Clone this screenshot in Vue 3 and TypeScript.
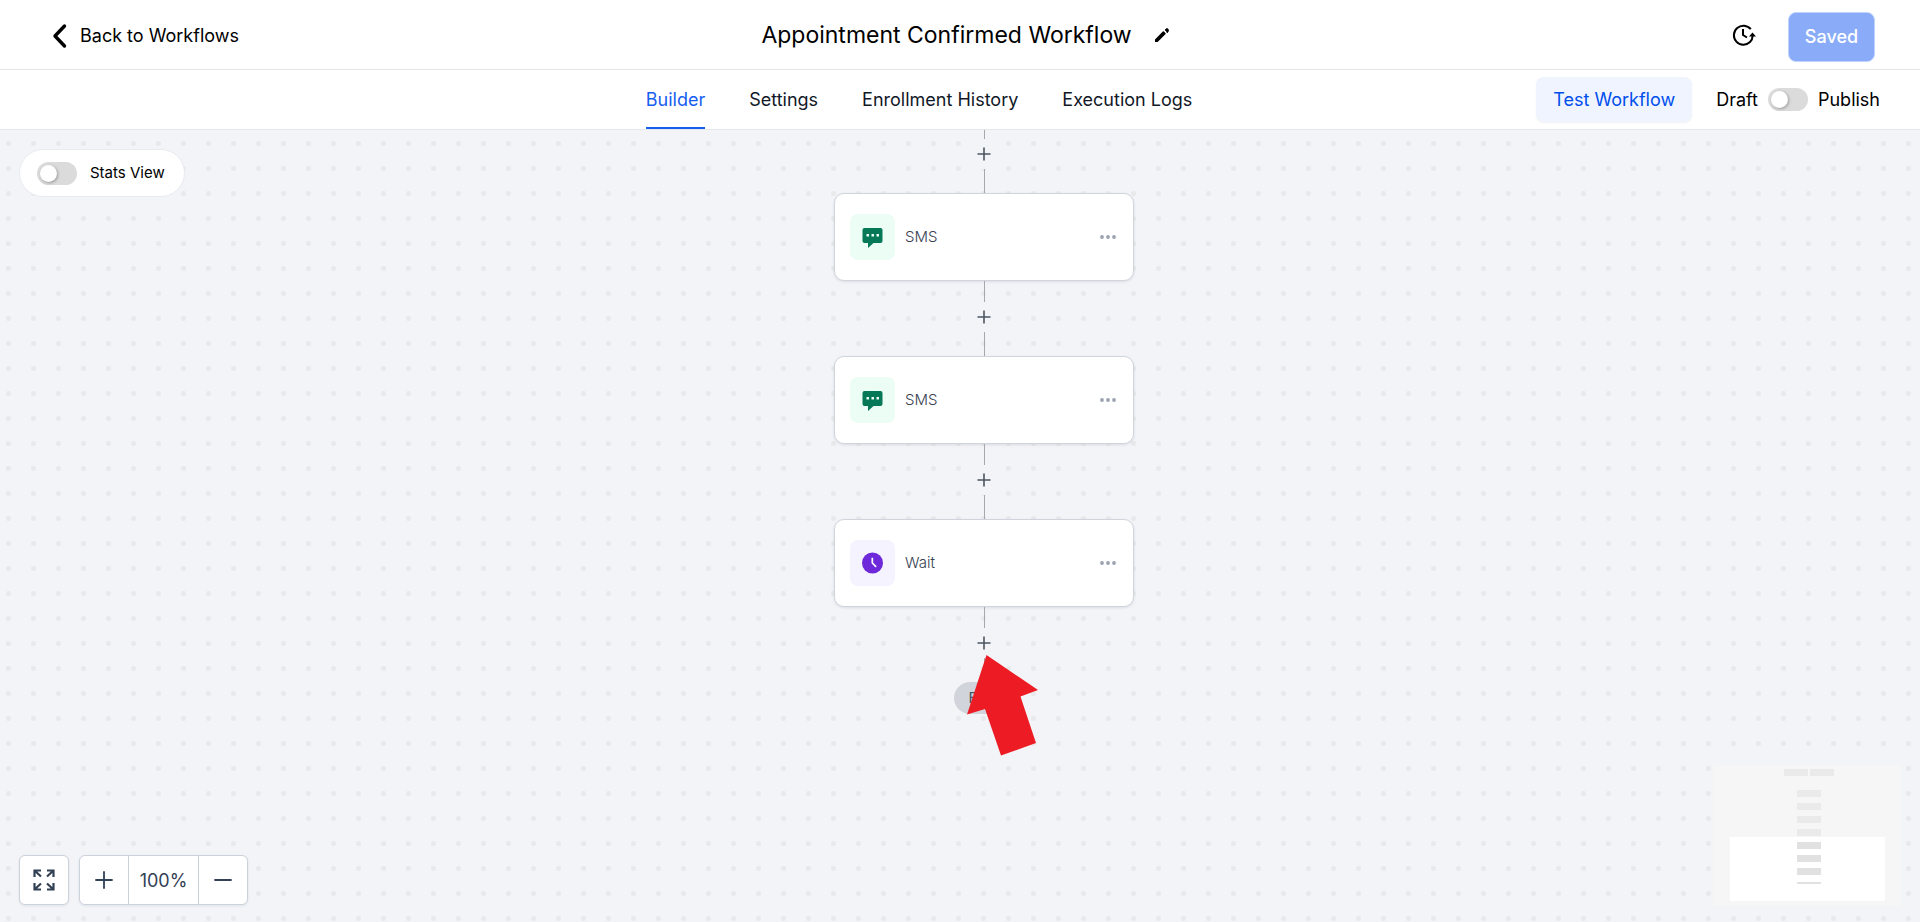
<script setup lang="ts">
import { ref } from 'vue'

interface WorkflowStep {
  id: number
  kind: 'sms' | 'wait'
  label: string
}

const tabs: string[] = ['Builder', 'Settings', 'Enrollment History', 'Execution Logs']
const activeTab = ref('Builder')
const published = ref(false)
const statsView = ref(false)
const zoomLevel = ref(100)

const steps: WorkflowStep[] = [
  { id: 1, kind: 'sms', label: 'SMS' },
  { id: 2, kind: 'sms', label: 'SMS' },
  { id: 3, kind: 'wait', label: 'Wait' },
]

const outsideNodes: number[] = [25, 38, 51, 64]
const insideNodes: number[] = [77, 90, 103]
</script>

<template>
  <div class="page">
    <header class="topbar">
      <a class="back" href="#">
        <svg width="15" height="26" viewBox="0 0 15 26" aria-hidden="true">
          <path d="M12.500 3 3 13l9.500 10" fill="none" stroke="#000" stroke-width="3.400" stroke-linecap="round" stroke-linejoin="round" />
        </svg>
        Back to Workflows
      </a>
      <div class="title-group">
        <h1>Appointment Confirmed Workflow</h1>
        <button class="icon-button" type="button" aria-label="Rename workflow">
          <svg width="16" height="16" viewBox="0 0 16 16" aria-hidden="true">
            <path d="M1 12.400 8.800 4.600q.6-.6 1.200 0l1.400 1.400q.6.600 0 1.200L3.600 15H1z" />
            <path d="M11 3l1-1q1-.9 2 0t0 3l-.8.800q-.4-1.800-2.200-2.800z" stroke="#000" stroke-width=".8" />
          </svg>
        </button>
      </div>
      <div class="top-actions">
        <button class="icon-button" type="button" aria-label="Version history">
          <svg width="24" height="24" viewBox="0 0 24 24" fill="none" stroke="#000" stroke-width="2" aria-hidden="true">
            <path d="M18.800 6.200A9.500 9.500 0 1 0 18 19q2.600-2.600 2.600-6" />
            <path d="M11 6v6l4 2.500" />
            <path d="M17 13.500 20.500 9.500 24 13.500z" fill="#000" stroke="none" />
          </svg>
        </button>
        <button class="saved" type="button">Saved</button>
      </div>
    </header>

    <nav class="tabbar">
      <div class="tabs">
        <button
          v-for="tab in tabs"
          :key="tab"
          type="button"
          class="tab"
          :class="{ active: tab === activeTab }"
          @click="activeTab = tab"
        >{{ tab }}</button>
      </div>
      <div class="tab-actions">
        <button class="test" type="button">Test Workflow</button>
        <label class="publish">
          Draft
          <input v-model="published" class="switch" type="checkbox" />
          Publish
        </label>
      </div>
    </nav>

    <main class="canvas">
      <div class="flow">
        <template v-for="step in steps" :key="step.id">
          <div class="connector">
            <button class="add" type="button" aria-label="Add step">
              <svg width="14" height="14" viewBox="0 0 14 14" aria-hidden="true">
                <path d="M7 .5v13M.5 7h13" stroke="#4b5563" stroke-width="1.600" />
              </svg>
            </button>
          </div>
          <article class="card">
            <span class="badge" :class="step.kind">
              <svg v-if="step.kind === 'sms'" width="21" height="22" viewBox="0.500 0 21 22" aria-hidden="true">
                <path d="M3 2h16q2 0 2 2v11q0 2-2 2h-7l-5.500 5V17H3q-2 0-2-2V4q0-2 2-2z" fill="#047857" />
                <path d="M5 8h2.500v2.500H5zM10 8h2.500v2.500H10zM15 8h2.500v2.500H15z" fill="#ecfdf5" />
              </svg>
              <svg v-else width="21" height="22" viewBox="0 0 22 22" aria-hidden="true">
                <circle cx="11" cy="11" r="11" fill="#6d28d9" />
                <path d="M10.800 5.500V11l4 4" fill="none" stroke="#fff" stroke-width="1.800" />
              </svg>
            </span>
            <span class="card-label">{{ step.label }}</span>
            <button class="more" type="button" :aria-label="`${step.label} options`">
              <svg width="16" height="4" viewBox="0 0 16 4" fill="#9ca3af" aria-hidden="true">
                <circle cx="2" cy="2" r="1.900" /><circle cx="8" cy="2" r="1.900" /><circle cx="14" cy="2" r="1.900" />
              </svg>
            </button>
          </article>
        </template>
        <div class="connector">
          <button class="add" type="button" aria-label="Add step">
            <svg width="14" height="14" viewBox="0 0 14 14" aria-hidden="true">
              <path d="M7 .5v13M.5 7h13" stroke="#4b5563" stroke-width="1.600" />
            </svg>
          </button>
        </div>
        <div class="end">
          END
          <svg class="pointer" width="72" height="102" viewBox="0 0 72 102" aria-hidden="true">
            <path d="M19.500 0 71 35 53.500 41.500 69 88 34 100.500 18 54 0 59.500z" fill="#ed1c24" />
          </svg>
        </div>
      </div>

      <label class="stats">
        <input v-model="statsView" class="switch" type="checkbox" />
        Stats View
      </label>

      <div class="controls">
        <button class="box fit" type="button" aria-label="Fit to screen">
          <svg width="22" height="22" viewBox="0 0 22 22" fill="none" stroke="#334155" stroke-width="2.200" aria-hidden="true">
            <path d="M1.500 8V1.500H8M1.500 1.500 8 7.500M14 1.500h6.500V8M20.500 1.500l-6.500 6M1.500 14v6.500H8M1.500 20.500 8 14.500M20.500 14v6.500H14M20.500 20.500l-6.500-6" />
          </svg>
        </button>
        <div class="box zoom">
          <button type="button" aria-label="Zoom in" @click="zoomLevel += 10">
            <svg width="18" height="18" viewBox="0 0 18 18" aria-hidden="true">
              <path d="M9 1v16M1 9h16" stroke="#334155" stroke-width="1.800" stroke-linecap="round" />
            </svg>
          </button>
          <output>{{ zoomLevel }}%</output>
          <button type="button" aria-label="Zoom out" @click="zoomLevel -= 10">
            <svg width="18" height="18" viewBox="0 0 18 18" aria-hidden="true">
              <path d="M1 9h16" stroke="#334155" stroke-width="1.800" stroke-linecap="round" />
            </svg>
          </button>
        </div>
      </div>

      <svg class="minimap" width="188" height="141" viewBox="0 0 188 141" aria-label="Workflow overview">
        <rect width="188" height="141" fill="#f6f6f6" />
        <rect x="17" y="72" width="155" height="64" fill="#fff" />
        <g fill="#eaeaea">
          <rect x="71" y="4" width="24" height="7" />
          <rect x="97" y="4" width="24" height="7" />
          <rect v-for="y in outsideNodes" :key="y" x="84" :y="y" width="24" height="7" />
        </g>
        <g fill="#e1e1e1">
          <rect v-for="y in insideNodes" :key="y" x="84" :y="y" width="24" height="7" />
          <rect x="84" y="117" width="24" height="2" />
        </g>
      </svg>
    </main>
  </div>
</template>

<style>
body {
  margin: 0;
}
</style>

<style scoped>
.page {
  display: flex;
  flex-direction: column;
  min-height: 100vh;
  background: #fff;
  color: #000;
  font: 18px/24px Inter, "Liberation Sans", sans-serif;
}

button {
  padding: 0;
  border: 0;
  background: none;
  color: inherit;
  font: inherit;
  cursor: pointer;
}

svg {
  display: block;
}

.topbar,
.tabbar {
  display: grid;
  grid-template-columns: 1fr auto 1fr;
  align-items: center;
  box-sizing: border-box;
  border-bottom: 1px solid #e5e7eb;
}

.topbar {
  height: 70px;
  padding: 0 45px 0 52px;
}

.back {
  display: flex;
  align-items: center;
  gap: 13px;
  padding-top: 2px;
  color: inherit;
  text-decoration: none;
}

.title-group {
  display: flex;
  align-items: center;
  gap: 22px;
  padding-left: 4px;
}

h1 {
  margin: 0;
  font-size: 23px;
  line-height: 32px;
  font-weight: 400;
}

.top-actions {
  display: flex;
  align-items: center;
  justify-content: flex-end;
  gap: 32px;
}

.saved {
  width: 87px;
  height: 50px;
  margin-top: 4px;
  border: 1px solid #bfd3fe;
  border-radius: 8px;
  background: #8aacf8;
  color: #fff;
  font-weight: 500;
}

.tabbar {
  height: 60px;
  padding: 0 40px;
}

.tabs {
  display: flex;
  grid-column: 2;
  align-self: stretch;
  gap: 44px;
  padding-right: 82px;
}

.tab {
  padding-top: 2px;
  border-bottom: 2px solid transparent;
  color: #111827;
}

.tab.active {
  border-color: #155eef;
  color: #155eef;
}

.tab-actions {
  display: flex;
  grid-column: 3;
  align-items: center;
  justify-content: flex-end;
  gap: 24px;
}

.test {
  height: 45px;
  padding: 0 17px;
  border-radius: 8px;
  background: #eff4ff;
  box-shadow: 0 1px 2px rgba(16, 24, 40, 0.06);
  color: #004eeb;
  white-space: nowrap;
}

.publish {
  display: flex;
  align-items: center;
  gap: 10px;
}

.switch {
  appearance: none;
  flex: none;
  box-sizing: border-box;
  width: 40px;
  height: 23px;
  margin: 0;
  padding: 3px;
  border-radius: 12px;
  background: #dbdbdb;
  cursor: pointer;
}

.switch::before {
  content: "";
  display: block;
  width: 17px;
  height: 17px;
  border-radius: 50%;
  background: #fff;
  box-shadow: 1px 1px 3px rgba(0, 0, 0, 0.3);
}

.switch:checked {
  background: #155eef;
}

.switch:checked::before {
  margin-left: 17px;
}

.canvas {
  position: relative;
  flex: 1;
  overflow: hidden;
  background-color: #f2f4f8;
  background-image: radial-gradient(circle, #e8e9ea 2px, transparent 3px);
  background-position: -4px 1px;
  background-size: 25px 25px;
}

.flow {
  display: flex;
  flex-direction: column;
  align-items: center;
  margin-top: -12px;
  padding-left: 48px;
}

.connector {
  display: flex;
  flex-direction: column;
  align-items: center;
  height: 75px;
}

.connector::before,
.connector::after {
  content: "";
  width: 1px;
  height: 21px;
  background: #a6a8ad;
}

.connector::after {
  flex: 1;
}

.add {
  display: grid;
  place-items: center;
  width: 30px;
  height: 30px;
  border-radius: 50%;
  background: #f2f4f8;
}

.card {
  display: flex;
  align-items: center;
  box-sizing: border-box;
  width: 300px;
  height: 88px;
  padding: 0 17px 0 15px;
  border: 1px solid #d0d5dd;
  border-radius: 10px;
  background: #fff;
  box-shadow: 0 1px 3px rgba(16, 24, 40, 0.1);
}

.badge {
  display: grid;
  place-items: center;
  width: 45px;
  height: 46px;
  margin-right: 10px;
  border-radius: 8px;
}

.sms {
  background: #ecfdf5;
}

.wait {
  background: #f5f3ff;
}

.card-label {
  flex: 1;
  color: #374151;
  font-size: 15px;
  font-weight: 300;
  line-height: 20px;
}

.end {
  position: relative;
  width: 60px;
  height: 32px;
  border-radius: 16px;
  background: #d1d5db;
  color: #475467;
  font-size: 15px;
  line-height: 32px;
  text-align: center;
}

.pointer {
  position: absolute;
  left: 13px;
  top: -27px;
}

.stats {
  position: absolute;
  left: 19px;
  top: 19px;
  display: flex;
  align-items: center;
  gap: 13px;
  box-sizing: border-box;
  height: 48px;
  padding: 0 19px 0 17px;
  border: 1px solid #e9ebf0;
  border-radius: 24px;
  background: #fff;
  font-size: 15px;
}

.controls {
  position: absolute;
  left: 19px;
  bottom: 17px;
  display: flex;
  gap: 10px;
  color: #334155;
}

.box {
  box-sizing: border-box;
  height: 50px;
  border: 1px solid #cbd2dc;
  border-radius: 6px;
  background: #fff;
  box-shadow: 0 1px 3px rgba(16, 24, 40, 0.08);
}

.fit {
  display: grid;
  place-items: center;
  width: 50px;
}

.zoom {
  display: flex;
}

.zoom button {
  display: grid;
  place-items: center;
  width: 48px;
}

.zoom output {
  width: 69px;
  border: solid #cbd2dc;
  border-width: 0 1px;
  line-height: 50px;
  text-align: center;
}

.minimap {
  position: absolute;
  right: 19px;
  bottom: 16px;
}
</style>
